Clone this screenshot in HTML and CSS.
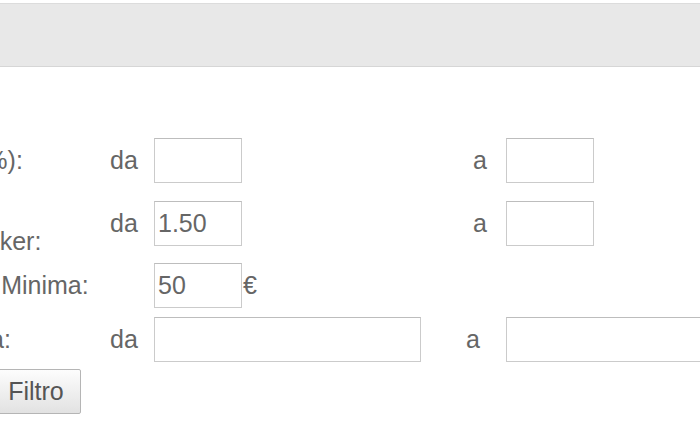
FILE: index.html
```html
<!DOCTYPE html>
<html lang="it">
<head>
    <meta charset="UTF-8">
    <title>Filtro</title>
    <link rel="stylesheet" href="styles.css">
</head>
<body>
    <div class="topbar"></div>

    <form class="filters">
        <div class="row row-first">
            <label class="label">Value (%):</label>
            <span class="from">da</span>
            <input class="field" type="text">
            <span class="to">a</span>
            <input class="field" type="text">
        </div>
        <div class="row row-second">
            <label class="label label-wrap">Quota<br>Bookmaker:</label>
            <span class="from">da</span>
            <input class="field" type="text" value="1.50">
            <span class="to">a</span>
            <input class="field" type="text">
        </div>
        <div class="row row-third">
            <label class="label">Puntata Minima:</label>
            <span class="from"></span>
            <input class="field" type="text" value="50">
            <span class="unit">€</span>
        </div>
        <div class="row row-fourth">
            <label class="label">Giornata:</label>
            <span class="from">da</span>
            <input class="field field-wide" type="text">
            <span class="to to-wide">a</span>
            <input class="field field-wide" type="text">
        </div>
        <div class="row row-button">
            <button class="btn" type="button">Filtro</button>
        </div>
    </form>
</body>
</html>
```

FILE: styles.css
```css
body {
    margin: 0;
    overflow-x: hidden;
    font-family: "Liberation Sans", Arial, sans-serif;
    font-size: 25px;
    color: #666;
    background: #fff;
}
.topbar {
    margin-top: 3px;
    height: 62px;
    background: #e8e8e8;
    border-top: 1px solid #dcdcdc;
    border-bottom: 1px solid #d6d6d6;
}
.filters {
    margin: 71px 0 0 -92px;   /*la colonna delle etichette esce a sinistra*/
    width: 900px;
}
.row {
    display: flex;
    align-items: center;
    height: 45px;
}
.row-second {
    margin-top: 18px;
}
.row-third {
    margin-top: 17px;
}
.row-fourth {
    margin-top: 9px;
}
.row-button {
    margin-top: 7px;
}
.label {
    flex: none;
    width: 202px;
    white-space: nowrap;
}
.label-wrap {
    align-self: flex-start;
    line-height: 27px;
}
.from {
    flex: none;
    width: 44px;
}
.to {
    flex: none;
    width: 264px;
    padding-right: 19px;
    box-sizing: border-box;
    text-align: right;
}
.to-wide {
    width: 85px;
    padding-right: 26px;
}
.field {
    flex: none;
    box-sizing: border-box;
    width: 88px;
    height: 45px;
    margin: 0;
    padding: 0 3px;
    border: 1px solid #cbcbcb;
    border-top-color: #bdbdbd;
    border-radius: 0;
    font: inherit;
    color: #666;
    background: #fff;
    outline: none;
}
.field-wide {
    width: 267px;
}
.unit {
    flex: none;
    padding-left: 1px;
}
.btn {
    box-sizing: border-box;
    width: 90px;
    height: 45px;
    margin: 0 0 0 83px;
    padding: 0;
    border: 1px solid #b5b5b5;
    border-radius: 2px;
    background: linear-gradient(#fdfdfd, #e2e2e2);
    font: inherit;
    color: #555;
}
```
